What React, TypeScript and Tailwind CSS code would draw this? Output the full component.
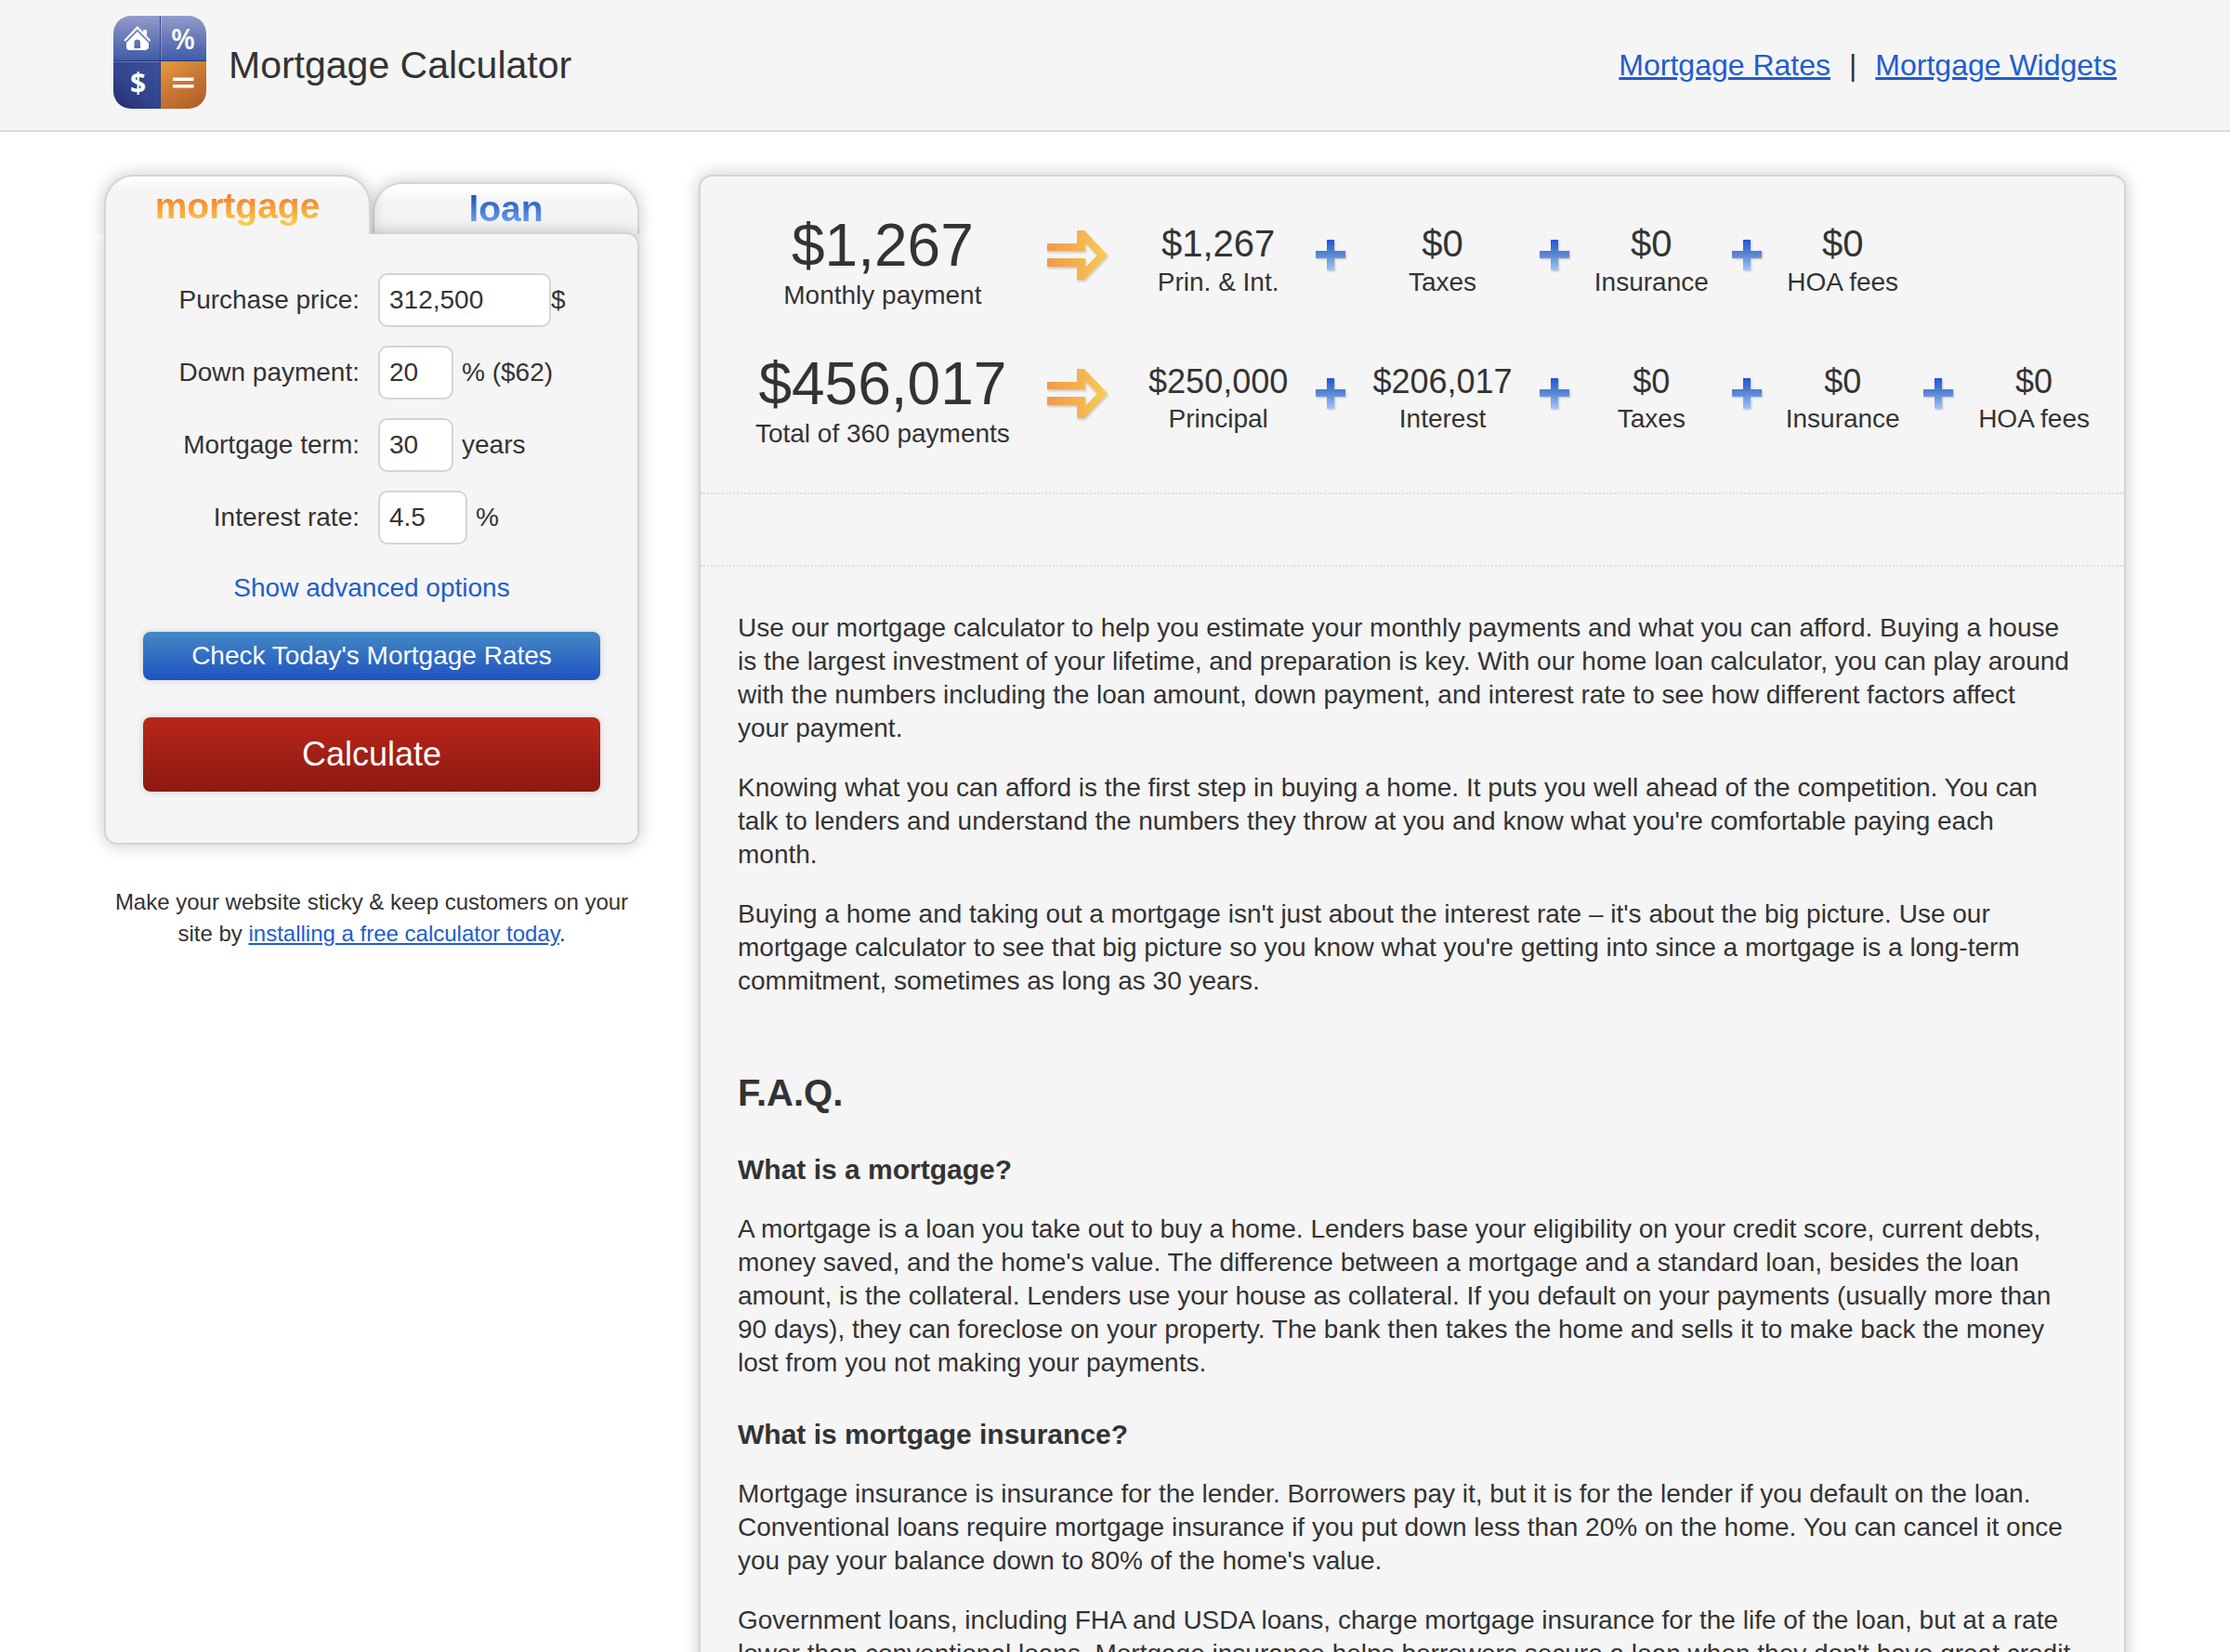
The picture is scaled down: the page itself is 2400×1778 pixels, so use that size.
import React, { useState } from "react";

type Item = { value: string; label: string };

const payment: Item = { value: "$1,267", label: "Monthly payment" };
const paymentParts: Item[] = [
  { value: "$1,267", label: "Prin. & Int." },
  { value: "$0", label: "Taxes" },
  { value: "$0", label: "Insurance" },
  { value: "$0", label: "HOA fees" },
];

const total: Item = { value: "$456,017", label: "Total of 360 payments" };
const totalParts: Item[] = [
  { value: "$250,000", label: "Principal" },
  { value: "$206,017", label: "Interest" },
  { value: "$0", label: "Taxes" },
  { value: "$0", label: "Insurance" },
  { value: "$0", label: "HOA fees" },
];

const SHADOW = "shadow-[0_0_18px_rgba(0,0,0,0.22)]";

function Logo() {
  return (
    <svg viewBox="0 0 100 100" className="size-[100px] shrink-0" aria-hidden="true">
      <defs>
        <linearGradient id="logoTop" x1="0" y1="0" x2="0" y2="1">
          <stop offset="0" stopColor="#949bce" />
          <stop offset="0.45" stopColor="#6c7cb9" />
          <stop offset="1" stopColor="#3c5ca8" />
        </linearGradient>
        <linearGradient id="logoLeft" x1="1" y1="0" x2="0.2" y2="1">
          <stop offset="0" stopColor="#3c5199" />
          <stop offset="0.6" stopColor="#32458f" />
          <stop offset="1" stopColor="#273272" />
        </linearGradient>
        <linearGradient id="logoOrange" x1="0.1" y1="0" x2="0.7" y2="1">
          <stop offset="0" stopColor="#e5993f" />
          <stop offset="0.5" stopColor="#ca7833" />
          <stop offset="1" stopColor="#b4602a" />
        </linearGradient>
        <clipPath id="logoClip">
          <rect width="100" height="100" rx="19" />
        </clipPath>
      </defs>
      <g clipPath="url(#logoClip)">
        <rect width="100" height="49" fill="url(#logoTop)" />
        <rect y="49" width="51" height="51" fill="url(#logoLeft)" />
        <rect x="51" y="49" width="49" height="51" fill="url(#logoOrange)" />
        <rect x="50" width="1" height="100" fill="#2a3a78" opacity="0.8" />
        <rect x="51" width="1" height="48" fill="#fff" opacity="0.25" />
        <rect y="48" width="100" height="1" fill="#26356f" opacity="0.9" />
        <rect y="49" width="50" height="1" fill="#fff" opacity="0.25" />
      </g>
      <path d="M12 27 L25.800 12.700 L39.500 27" fill="none" stroke="#fff" strokeWidth="2.200" />
      <g fill="#fff">
        <path d="M32 15 h4 v8 l-4 -4 z" />
        <path
          d="M25.800 17 L38 29 V35.500 H36 V37 H15.500 V35.500 H14 V29 Z M22.500 35 H29 V28.500 Q29 25.500 25.800 25.500 Q22.500 25.500 22.500 28.500 Z"
          fillRule="evenodd"
        />
        <rect x="64" y="66.500" width="22.500" height="3.500" />
        <rect x="64" y="74" width="22.500" height="3.500" />
      </g>
      <g fill="#fff" fontFamily="'Open Sans', sans-serif" textAnchor="middle">
        <text x="75" y="36" fontSize="30" fontWeight="600">
          %
        </text>
        <text x="26.500" y="83" fontSize="30" fontWeight="700">
          $
        </text>
      </g>
    </svg>
  );
}

function Arrow() {
  return (
    <svg viewBox="0 0 65 54" className="h-[54px] w-[65px] drop-shadow-[1px_2px_1px_rgba(0,0,0,0.18)]" aria-hidden="true">
      <defs>
        <linearGradient id="arrowFill" x1="0" y1="0" x2="1" y2="0">
          <stop offset="0" stopColor="#f3994a" />
          <stop offset="0.6" stopColor="#f4b64e" />
          <stop offset="1" stopColor="#f8cf52" />
        </linearGradient>
      </defs>
      <path
        d="M0 14 H32 V0 H40 L65 26.500 L40 53 H32 V39 H0 V30 H41 V40 L54 26.500 L41 13 V22 H0 Z"
        fill="url(#arrowFill)"
      />
    </svg>
  );
}

function Plus() {
  return (
    <svg viewBox="0 0 32 33" className="h-[33px] w-8 drop-shadow-[1px_1px_1px_rgba(0,0,0,0.2)]" aria-hidden="true">
      <defs>
        <linearGradient id="plusFill" x1="0" y1="0" x2="0" y2="1">
          <stop offset="0" stopColor="#1f56d8" />
          <stop offset="0.5" stopColor="#5c88d4" />
          <stop offset="1" stopColor="#9fc6ff" />
        </linearGradient>
      </defs>
      <path d="M12 0 H20 V12 H32 V20 H20 V33 H12 V20 H0 V12 H12 Z" fill="url(#plusFill)" />
    </svg>
  );
}

function ResultRow({ sum, parts, small }: { sum: Item; parts: Item[]; small?: boolean }) {
  return (
    <div className="grid h-[149px] grid-cols-[312fr_108px_195fr_46px_196fr_46px_162fr_44px_162fr_44px_162fr] items-start text-center">
      <div>
        <div className="text-[64px] leading-[72px]">{sum.value}</div>
        <div className="text-[28px] leading-9">{sum.label}</div>
      </div>
      <div className="flex justify-center pt-5">
        <Arrow />
      </div>
      {parts.map((part, i) => (
        <React.Fragment key={part.label}>
          {i > 0 && (
            <div className="flex justify-center pt-[30px]">
              <Plus />
            </div>
          )}
          <div className={`whitespace-nowrap ${small ? "pt-3" : "pt-[10px]"}`}>
            <div className={small ? "text-[36px] leading-[44px]" : "text-[40px] leading-[48px]"}>{part.value}</div>
            <div className="text-[28px] leading-9">{part.label}</div>
          </div>
        </React.Fragment>
      ))}
    </div>
  );
}

function Field({
  id,
  label,
  value,
  suffix,
  width,
  tight,
}: {
  id: string;
  label: string;
  value: string;
  suffix: string;
  width: string;
  tight?: boolean;
}) {
  const [text, setText] = useState(value);
  return (
    <div className="flex items-center">
      <label htmlFor={id} className="w-[277px] pr-5 text-right">
        {label}
      </label>
      <input
        id={id}
        value={text}
        onChange={(e) => setText(e.target.value)}
        className={`h-[58px] rounded-[10px] border-2 border-[#d4d4d4] bg-white px-[10px] outline-none ${width}`}
      />
      <span className={tight ? "" : "pl-[9px]"}>{suffix}</span>
    </div>
  );
}

function Calculator() {
  return (
    <aside className="w-[576px] shrink-0">
      <div className="flex h-[64px] items-end gap-[2px]" role="tablist">
        <button
          role="tab"
          aria-selected="true"
          className={`relative z-20 flex h-[64px] w-[287px] justify-center rounded-t-[32px] border-2 border-b-0 border-[#d4d4d4] bg-[#f5f5f5] bg-linear-to-b from-white to-[#f5f5f5] to-25% pt-[7px] [clip-path:inset(-24px_-24px_0_-24px)] ${SHADOW}`}
        >
          <span className="bg-linear-to-b from-[#ee6f2c] from-15% to-[#fbd84a] to-90% bg-clip-text text-[39px] leading-[50px] font-bold text-transparent">
            mortgage
          </span>
        </button>
        <button
          role="tab"
          aria-selected="false"
          className={`flex h-[56px] flex-1 justify-center rounded-t-[32px] border-2 border-b-0 border-[#d4d4d4] bg-linear-to-b from-white from-10% to-[#f5f5f5] to-30% pt-[2px] ${SHADOW}`}
        >
          <span className="bg-linear-to-b from-[#1f56b4] from-20% to-[#6ea2fb] to-80% bg-clip-text text-[39px] leading-[50px] font-bold text-transparent">
            loan
          </span>
        </button>
      </div>
      <form
        onSubmit={(e) => e.preventDefault()}
        className={`relative z-10 -mt-[2px] flex flex-col rounded-[14px] rounded-tl-none border-2 border-[#d4d4d4] bg-[#f5f5f5] px-10 pt-[42px] pb-[55px] text-[28px] leading-9 ${SHADOW}`}
      >
        <div className="-ml-[24px] flex flex-col gap-5">
          <Field id="price" label="Purchase price:" value="312,500" suffix="$" width="w-[186px]" tight />
          <Field id="down" label="Down payment:" value="20" suffix="% ($62)" width="w-[81px]" />
          <Field id="term" label="Mortgage term:" value="30" suffix="years" width="w-[81px]" />
          <Field id="rate" label="Interest rate:" value="4.5" suffix="%" width="w-[96px]" />
        </div>
        <button type="button" className="mt-[29px] self-center text-[#225cd0]">
          Show advanced options
        </button>
        <button
          type="button"
          className="mt-[29px] h-[52px] rounded-lg bg-linear-to-b from-[#4688c5] to-[#2152c0] text-white shadow-[0_0_8px_rgba(0,0,0,0.15)]"
        >
          Check Today's Mortgage Rates
        </button>
        <button
          type="submit"
          className="mt-10 h-20 rounded-lg bg-linear-to-b from-[#ba261b] to-[#8b1910] text-[36px] text-white shadow-[0_0_8px_rgba(0,0,0,0.15)]"
        >
          Calculate
        </button>
      </form>
      <p className="mt-[45px] px-2 text-center text-[24px] leading-[34px]">
        Make your website sticky &amp; keep customers on your site by{" "}
        <a href="#install" className="text-[#225cd0] underline">
          installing a free calculator today
        </a>
        .
      </p>
    </aside>
  );
}

export default function App() {
  return (
    <div className="bg-white font-['Liberation_Sans',Arial,sans-serif] text-[#333333]">
      <header className="flex h-[142px] items-center justify-between border-b-2 border-[#d9d9d9] bg-[#f5f5f5] px-[122px] pb-[6px]">
        <div className="flex items-center gap-6">
          <Logo />
          <h1 className="pt-1.5 text-[41px] leading-[48px]">Mortgage Calculator</h1>
        </div>
        <nav className="flex items-center gap-5 pt-1.5 text-[32px] leading-9">
          <a href="#rates" className="text-[#225cd0] underline">
            Mortgage Rates
          </a>
          <span>|</span>
          <a href="#widgets" className="text-[#225cd0] underline">
            Mortgage Widgets
          </a>
        </nav>
      </header>

      <div className="flex items-start gap-16 px-28 pt-[46px]">
        <Calculator />
        <main className={`flex-1 rounded-[14px] border-2 border-[#d4d4d4] bg-[#f5f5f5] ${SHADOW}`}>
          <section className="pt-[38px] pr-4 pb-1 pl-10">
            <ResultRow sum={payment} parts={paymentParts} />
            <ResultRow sum={total} parts={totalParts} small />
          </section>
          <div className="h-20 border-y-2 border-dotted border-[#dedede]" />
          <article className="flex flex-col gap-7 pt-12 pr-14 pb-10 pl-10 text-[28px] leading-9">
            <p>
              Use our mortgage calculator to help you estimate your monthly payments and what you can afford. Buying a house is the largest
              investment of your lifetime, and preparation is key. With our home loan calculator, you can play around with the numbers
              including the loan amount, down payment, and interest rate to see how different factors affect your payment.
            </p>
            <p>
              Knowing what you can afford is the first step in buying a home. It puts you well ahead of the competition. You can talk to
              lenders and understand the numbers they throw at you and know what you're comfortable paying each month.
            </p>
            <p>
              Buying a home and taking out a mortgage isn't just about the interest rate – it's about the big picture. Use our mortgage
              calculator to see that big picture so you know what you're getting into since a mortgage is a long-term commitment, sometimes as
              long as 30 years.
            </p>
            <h2 className="mt-[50px] text-[40px] leading-[48px] font-bold">F.A.Q.</h2>
            <h3 className="mt-[13px] text-[30px] leading-9 font-bold">What is a mortgage?</h3>
            <p>
              A mortgage is a loan you take out to buy a home. Lenders base your eligibility on your credit score, current debts, money saved,
              and the home's value. The difference between a mortgage and a standard loan, besides the loan amount, is the collateral. Lenders
              use your house as collateral. If you default on your payments (usually more than 90 days), they can foreclose on your property.
              The bank then takes the home and sells it to make back the money lost from you not making your payments.
            </p>
            <h3 className="mt-[13px] text-[30px] leading-9 font-bold">What is mortgage insurance?</h3>
            <p>
              Mortgage insurance is insurance for the lender. Borrowers pay it, but it is for the lender if you default on the loan.
              Conventional loans require mortgage insurance if you put down less than 20% on the home. You can cancel it once you pay your
              balance down to 80% of the home's value.
            </p>
            <p>
              Government loans, including FHA and USDA loans, charge mortgage insurance for the life of the loan, but at a rate lower than
              conventional loans. Mortgage insurance helps borrowers secure a loan when they don't have great credit
            </p>
          </article>
        </main>
      </div>
    </div>
  );
}
